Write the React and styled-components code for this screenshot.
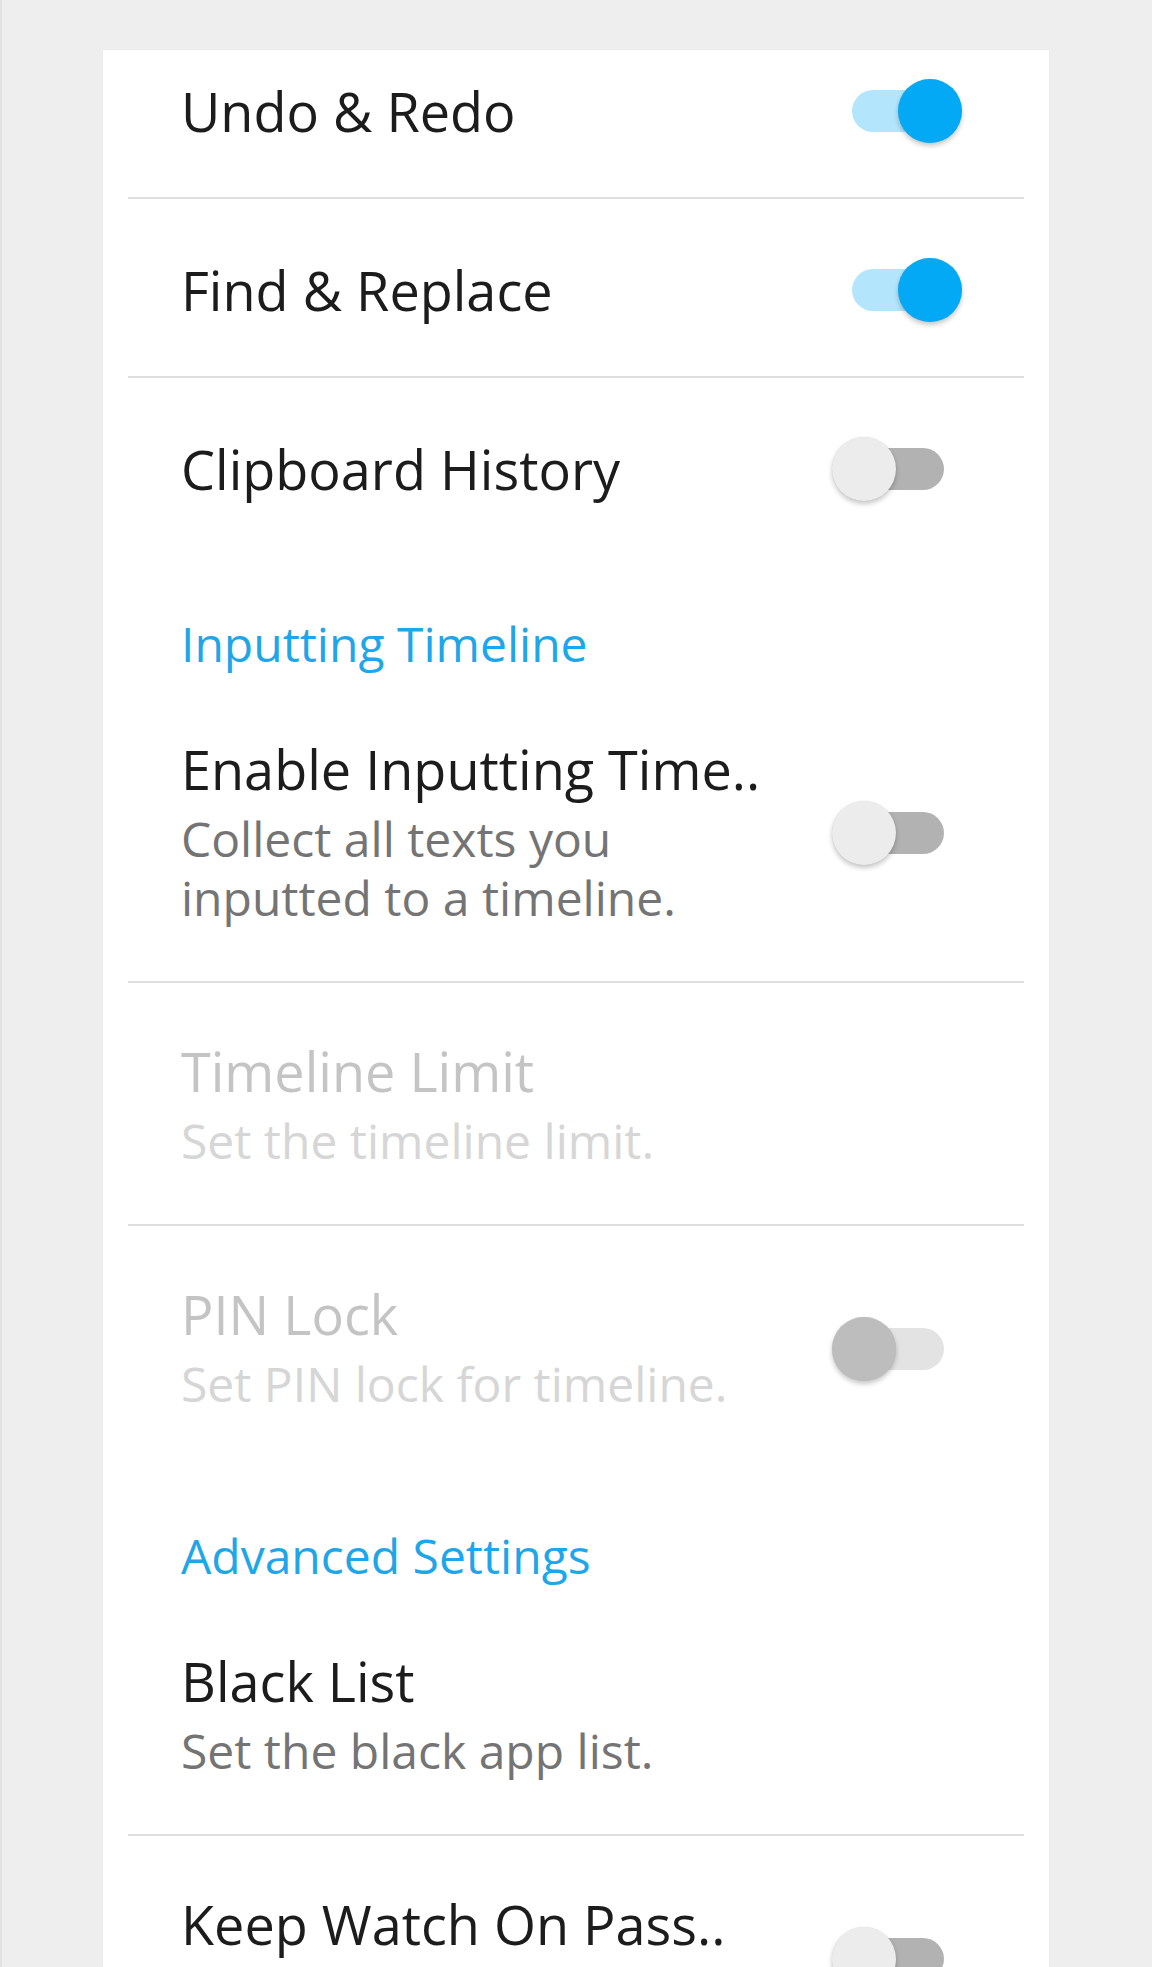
import React from "react";
import styled, { createGlobalStyle } from "styled-components";

const GlobalStyle = createGlobalStyle`
  html, body {
    margin: 0;
    padding: 0;
    background: #eeeeee;
  }
  body {
    font-family: "Open Sans", "Noto Sans", sans-serif;
    -webkit-font-smoothing: antialiased;
  }
`;

const sections = [
  {
    rows: [
      { title: "Undo & Redo", toggle: "on" },
      { title: "Find & Replace", toggle: "on" },
      { title: "Clipboard History", toggle: "off" },
    ],
  },
  {
    header: "Inputting Timeline",
    rows: [
      {
        title: "Enable Inputting Time..",
        subtitle: "Collect all texts you inputted to a timeline.",
        toggle: "off",
      },
      {
        title: "Timeline Limit",
        subtitle: "Set the timeline limit.",
        disabled: true,
      },
      {
        title: "PIN Lock",
        subtitle: "Set PIN lock for timeline.",
        toggle: "off",
        disabled: true,
      },
    ],
  },
  {
    header: "Advanced Settings",
    rows: [
      { title: "Black List", subtitle: "Set the black app list." },
      { title: "Keep Watch On Pass..", subtitle: null, toggle: "off" },
    ],
  },
];

const Switch = ({ on, disabled }) => (
  <SwitchBox>
    <Track $on={on} $disabled={disabled} />
    <Thumb $on={on} $disabled={disabled} />
  </SwitchBox>
);

export default function App() {
  return (
    <Page>
      <GlobalStyle />
      <Card>
        <List>
          {sections.map((section, i) => (
            <Section key={i}>
              {section.header && <Header>{section.header}</Header>}
              {section.rows.map((row) => (
                <Row key={row.title}>
                  <TextCol>
                    <Title $disabled={row.disabled}>{row.title}</Title>
                    {row.subtitle !== undefined && (
                      <Subtitle $disabled={row.disabled}>{row.subtitle}</Subtitle>
                    )}
                  </TextCol>
                  {row.toggle && (
                    <Switch on={row.toggle === "on"} disabled={row.disabled} />
                  )}
                </Row>
              ))}
            </Section>
          ))}
        </List>
      </Card>
    </Page>
  );
}

//styles
const Page = styled.div`
  height: 1967px;
  overflow: hidden;
  padding: 50px 103px 0 103px;
  box-sizing: border-box;
  box-shadow: inset 2px 0 0 #e2e2e2;
`;

const Card = styled.div`
  background: #ffffff;
  height: 100%;
  overflow: hidden;
  padding: 0 25px;
  box-shadow: 0 0 1px rgba(0, 0, 0, 0.08);
`;

const List = styled.div`
  margin-top: -30px;
`;

const Section = styled.div`
  display: flex;
  flex-direction: column;
`;

const Header = styled.div`
  padding: 64px 0 12px 53px;
  font-size: 48px;
  line-height: 50px;
  color: #1fa6e8;
`;

const Row = styled.div`
  display: flex;
  align-items: center;
  min-height: 65px;
  padding: 58px 62px 54px 53px;
  & + & {
    border-top: 2px solid #dedede;
  }
`;

const TextCol = styled.div`
  flex: 1;
  min-width: 0;
  display: flex;
  flex-direction: column;
  gap: 10px;
  padding-right: 30px;
`;

const Title = styled.div`
  font-size: 54px;
  line-height: 60px;
  white-space: nowrap;
  color: ${(p) => (p.$disabled ? "#c4c4c4" : "#1c1c1c")};
`;

const Subtitle = styled.div`
  min-height: 59px;
  font-size: 48px;
  line-height: 59px;
  color: ${(p) => (p.$disabled ? "#d6d6d6" : "#747474")};
`;

const SwitchBox = styled.div`
  position: relative;
  flex: none;
  width: 130px;
  height: 64px;
`;

const Track = styled.div`
  position: absolute;
  left: 20px;
  top: 11px;
  width: 92px;
  height: 42px;
  border-radius: 21px;
  background: ${(p) =>
    p.$disabled ? "#e3e3e3" : p.$on ? "#b3e5fc" : "#b2b2b2"};
`;

const Thumb = styled.div`
  position: absolute;
  top: 0;
  left: ${(p) => (p.$on ? "66px" : "0")};
  width: 64px;
  height: 64px;
  border-radius: 50%;
  background: ${(p) =>
    p.$disabled ? "#bdbdbd" : p.$on ? "#03a9f4" : "#ececec"};
  box-shadow: 0 3px 5px rgba(0, 0, 0, 0.22), 0 0 1px rgba(0, 0, 0, 0.12);
`;
